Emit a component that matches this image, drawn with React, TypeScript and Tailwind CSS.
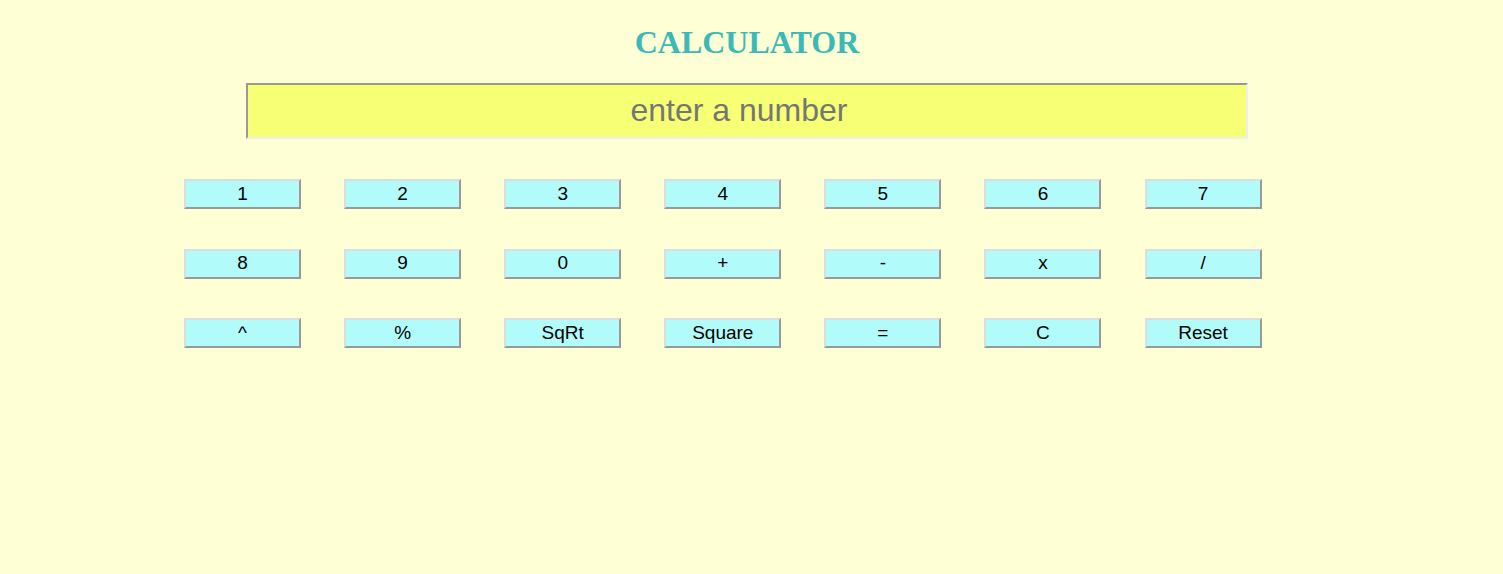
const rows = [
  ["1", "2", "3", "4", "5", "6", "7"],
  ["8", "9", "0", "+", "-", "x", "/"],
  ["^", "%", "SqRt", "Square", "=", "C", "Reset"],
];

export default function App() {
  return (
    <div className="min-h-screen bg-[#ffffd6] pr-[9px]" style={{ fontFamily: '"Liberation Sans", Arial, sans-serif' }}>
      <h1
        className="pt-[24px] text-center text-[32px] font-bold leading-[37px] text-[#3bb9b9]"
        style={{ fontFamily: '"Liberation Serif", "Times New Roman", serif' }}
      >
        CALCULATOR
      </h1>
      <input
        type="text"
        placeholder="enter a number"
        className="mx-auto mt-[22px] block h-[56px] w-[1002px] border-2 border-t-[#999999] border-l-[#999999] border-r-[#eeeeee] border-b-[#eeeeee] bg-[#f7ff74] pr-[16px] pb-[2px] text-center text-[32px] text-black outline-none placeholder:text-[#757575]"
      />
      <div className="ml-[184px] mt-[40px] flex flex-col gap-[39.5px]">
        {rows.map((row, i) => (
          <div key={i} className="flex gap-[43.1px]">
            {row.map((b) => (
              <button
                key={b}
                className="h-[30px] w-[117px] border-2 border-t-[#dddddd] border-l-[#dddddd] border-r-[#999999] border-b-[#999999] bg-[#b1fbfb] pb-[2px] text-[19px] leading-none text-black"
              >
                {b}
              </button>
            ))}
          </div>
        ))}
      </div>
    </div>
  );
}
